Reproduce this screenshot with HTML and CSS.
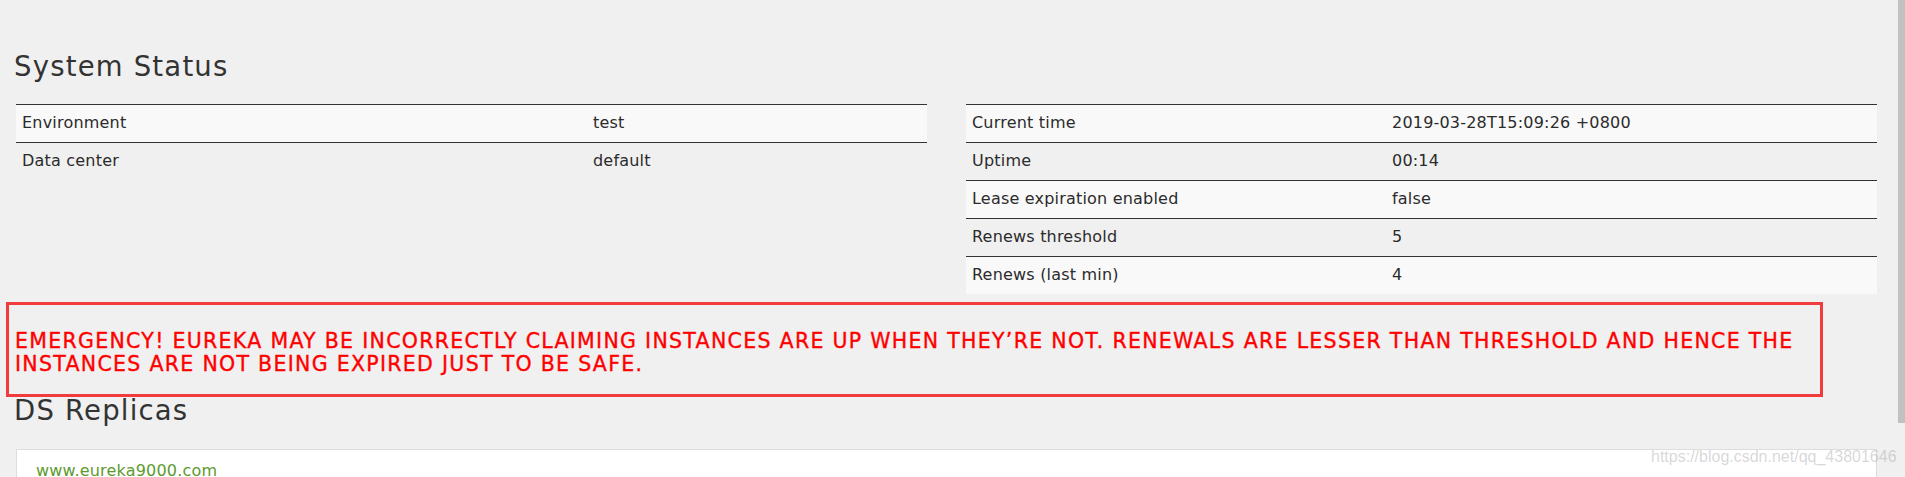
FILE: index.html
```html
<!DOCTYPE html>
<html lang="en">
<head>
    <meta charset="UTF-8">
    <meta name="viewport" content="width=device-width, initial-scale=1.0">
    <title>Eureka</title>
    <link rel="stylesheet" href="styles.css">
</head>
<body>
    <div class="container">
        <h1>System Status</h1>
        <div class="status-grid">
            <table class="info-table env-table">
                <tbody>
                    <tr><td>Environment</td><td>test</td></tr>
                    <tr><td>Data center</td><td>default</td></tr>
                </tbody>
            </table>
            <table class="info-table time-table">
                <tbody>
                    <tr><td>Current time</td><td>2019-03-28T15:09:26 +0800</td></tr>
                    <tr><td>Uptime</td><td>00:14</td></tr>
                    <tr><td>Lease expiration enabled</td><td>false</td></tr>
                    <tr><td>Renews threshold</td><td>5</td></tr>
                    <tr><td>Renews (last min)</td><td>4</td></tr>
                </tbody>
            </table>
        </div>

        <div class="emergency">
            <h4>EMERGENCY! EUREKA MAY BE INCORRECTLY CLAIMING INSTANCES ARE UP WHEN THEY’RE NOT. RENEWALS ARE LESSER THAN THRESHOLD AND HENCE THE INSTANCES ARE NOT BEING EXPIRED JUST TO BE SAFE.</h4>
        </div>

        <h1 class="replicas-title">DS Replicas</h1>
        <div class="replicas">
            <a href="#">www.eureka9000.com</a>
        </div>
    </div>

    <div class="watermark">https://blog.csdn.net/qq_43801646</div>
    <div class="scrollbar"></div>
</body>
</html>
```

FILE: styles.css
```css
html, body {
    overflow: hidden;
}

body {
    font-family: 'DejaVu Sans', sans-serif;
    margin: 0;
    padding: 0;
    background-color: #f0f0f0;
    color: #2b2b2b;
}

.container {
    padding: 50px 28px 0 16px;
}

h1 {
    font-size: 27.5px;
    line-height: 32px;
    font-weight: normal;
    letter-spacing: 1.2px;
    color: #333;
    margin: 0 0 22px -2px;
}

.status-grid {
    display: grid;
    grid-template-columns: 1fr 1fr;
    column-gap: 39px;
    align-items: start;
}

.info-table {
    width: 100%;
    border-collapse: collapse;
    table-layout: fixed;
}

.info-table td {
    box-sizing: border-box;
    border-top: 1px solid #333;
    padding: 7px 6px 9px;
    font-size: 16px;
    line-height: 21px;
    letter-spacing: 0.2px;
    white-space: nowrap;
}

.info-table tr:nth-child(odd) td {
    background-color: #f9f9f9;
}

.env-table td:first-child {
    width: 571px;
}

.time-table td:first-child {
    width: 420px;
}

.emergency {
    margin: 8px 54px 0 -10px;
    border: 3px solid #f03c3c;
    padding: 25px 0 17px 6px;
}

.emergency h4 {
    margin: 0;
    font-size: 20.5px;
    line-height: 23.3px;
    font-weight: normal;
    letter-spacing: 1.3px;
    color: #ff0000;
    -webkit-text-stroke: 0.35px #ff0000;
}

.replicas-title {
    margin-top: -3px;
    margin-bottom: 23px;
}

.replicas {
    background-color: #fff;
    border: 1px solid #ddd;
    padding: 10px 19px;
    min-height: 80px;
}

.replicas a {
    color: #5c9a2e;
    font-size: 16px;
    line-height: 21px;
    letter-spacing: 0.2px;
    text-decoration: none;
}

.watermark {
    position: absolute;
    left: 1651px;
    top: 448px;
    font-family: 'Liberation Sans', Arial, sans-serif;
    font-size: 16px;
    color: rgba(150, 150, 150, 0.38);
}

.scrollbar {
    position: fixed;
    top: 0;
    right: 0;
    width: 7px;
    height: 423px;
    background-color: #c1c1c1;
}
```
